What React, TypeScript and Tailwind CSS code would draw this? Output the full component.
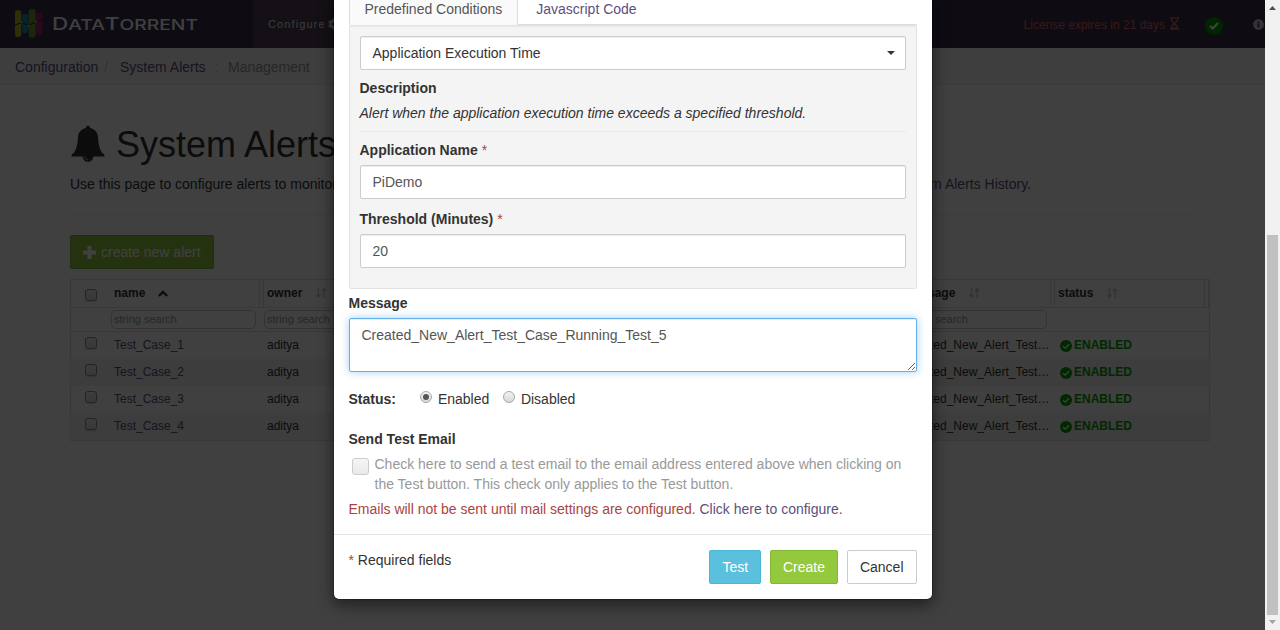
import React from "react";
import { FaCog, FaInfoCircle } from "react-icons/fa";

const rows = ["Test_Case_1", "Test_Case_2", "Test_Case_3", "Test_Case_4"];

function Logo() {
  return (
    <svg width="186" height="34" viewBox="0 0 186 34" className="shrink-0">
      <rect x="0" y="4" width="6.2" height="27" rx="3" fill="#bdb91e" />
      <rect x="6.7" y="7.7" width="6.5" height="19.3" rx="3" fill="#1b8ab2" />
      <rect x="13.7" y="3" width="7" height="28.7" rx="3.2" fill="#6b9c2e" />
      <rect x="21.3" y="6.300" width="6.2" height="22.700" rx="3" fill="#a61d76" />
      <path d="M0 19L7 16.500L13.300 19.700L21 15.700L27.500 14" stroke="#252033" strokeWidth="1" fill="none" />
      <circle cx="6.700" cy="16.500" r="1" fill="#d8c83c" />
      <circle cx="13.500" cy="19.700" r="1" fill="#d8c83c" />
      <circle cx="21" cy="15.700" r="1" fill="#d8c83c" />
      <text
        x="37"
        y="23.7"
        fill="#fff"
        textLength="146"
        lengthAdjust="spacingAndGlyphs"
        className="font-['Inter',sans-serif] text-[17px] font-medium"
      >
        D<tspan className="text-[14.5px]">ATA</tspan>T<tspan className="text-[14.5px]">ORRENT</tspan>
      </text>
    </svg>
  );
}

function Hourglass() {
  return (
    <svg width="9" height="13" viewBox="0 0 9 13" className="mb-px ml-[5px]" fill="none" stroke="#dd6663" strokeWidth="1.2">
      <path d="M0 .9h9M0 12.1h9M1.4 1v2.200L4.500 6.500L1.400 9.800V12M7.600 1v2.200L4.500 6.500L7.600 9.800V12M2.500 10.800h4" />
    </svg>
  );
}

function SortIcon() {
  return (
    <svg width="11" height="10" viewBox="0 0 11 10" fill="none" stroke="#c8c8c8" strokeWidth="1.3">
      <path d="M2.5 0v9M.3 6.8L2.5 9.2L4.7 6.8M8 10V1M5.8 3.2L8 .8L10.2 3.2" />
    </svg>
  );
}

function Box() {
  return <div className="h-3 w-3 rounded-[3px] border border-[#8f8f8f] bg-linear-to-b from-[#f4f4f4] to-[#dddddd] shadow-[0_1px_1px_rgba(0,0,0,0.15)]" />;
}

function Search({ className }: { className: string }) {
  return (
    <div className={`flex h-[19px] items-center rounded-[5px] border border-[#ccc] bg-white pl-[2px] text-[11px] text-[#999] ${className}`}>
      string search
    </div>
  );
}

function AlertsTable() {
  return (
    <div className="mt-[10px] h-[162px] w-[1140px] border border-[#ddd] text-[12px] leading-[17px]">
      <div className="flex h-[28px] border-b border-[#ddd] font-bold">
        <div className="w-[39px] pt-[9px] pl-[14px]"><Box /></div>
        <div className="flex w-[150px] border-r border-[#ddd] pt-[5px] pl-1">
          name
          <svg width="10" height="7" viewBox="0 0 10 7" className="mt-[5px] ml-[13px]" fill="none" stroke="#333" strokeWidth="2.4">
            <path d="M.9 6L5 1.900L9.100 6" />
          </svg>
        </div>
        <div className="ml-[3px] flex w-[150px] border-l border-[#ddd] pt-[5px] pl-[3px]">
          owner
          <span className="mt-[3px] ml-[14px]"><SortIcon /></span>
        </div>
        <div className="ml-auto flex w-[151px] border-r border-[#ddd] pt-[5px] pl-[4px]">
          message
          <span className="mt-[3px] ml-[14px]"><SortIcon /></span>
        </div>
        <div className="ml-[3px] flex w-[151px] border-x border-[#ddd] pt-[5px] pl-[3px]">
          status
          <span className="mt-[3px] ml-[14px]"><SortIcon /></span>
        </div>
        <div className="ml-[3px] w-[1px] bg-[#ddd]" />
      </div>
      <div className="flex h-[24px] border-b border-[#ddd] pt-[2px]">
        <Search className="ml-[40px] w-[145px]" />
        <Search className="ml-[8px] w-[145px]" />
        <Search className="ml-auto mr-[162px] w-[145px]" />
      </div>
      {rows.map((name) => (
        <div key={name} className="flex h-[27px] pt-[5px] [&:nth-child(even)]:bg-[#f1f1f1] [&:nth-child(odd)]:bg-white">
          <div className="w-[39px] pl-[14px]"><Box /></div>
          <div className="w-[153px] pl-1 text-[#5d5080]">{name}</div>
          <div className="pl-1">aditya</div>
          <div className="ml-auto w-[155px] pl-1">Created_New_Alert_Test…</div>
          <div className="flex w-[154px] pl-[5px] font-bold text-[#00a300]">
            <svg width="12" height="12" viewBox="0 0 12 12" className="mt-[3px] mr-[2px]">
              <circle cx="6" cy="6" r="6" fill="#00a300" />
              <path d="M3 6.200L5.200 8.200L9.100 4.200" fill="none" stroke="#fff" strokeWidth="1.3" />
            </svg>
            ENABLED
          </div>
        </div>
      ))}
    </div>
  );
}

function Page() {
  return (
    <div className="h-[630px] w-[1265px] bg-white">
      <header className="flex h-12 bg-[#382f4c]">
        <div className="w-[253px] pt-[6px] pl-[15px]"><Logo /></div>
        <div className="flex w-[100px] items-center bg-[#50405a] pl-[15px] text-[11px] tracking-[1.1px] text-[#e6e6e6]">
          Configure <FaCog className="ml-[2px] h-3 w-3" />
        </div>
        <div className="ml-auto flex items-center text-[12px] text-[#dd6663]">
          <span className="pt-px">License expires in 21 days</span> <Hourglass />
          <span className="mt-[3px] ml-[26px] flex h-[18px] w-[18px] items-center justify-center rounded-full bg-[#009900]">
            <svg width="10" height="8" viewBox="0 0 10 8" fill="none" stroke="#fff" strokeWidth="2.2"><path d="M1 4L3.7 6.5L9 1" /></svg>
          </span>
          <FaInfoCircle className="ml-[30px] h-[11px] w-[11px] text-[#ccc]" />
          <span className="w-[1px]" />
        </div>
      </header>
      <nav className="flex h-[37px] items-center border-b border-[#eaeaea] bg-[#f5f5f5] pt-[2px] pl-[15px] text-[#5d5080]">
        <span className="w-[89px]">Configuration</span>
        <span className="w-[16px] text-[#ccc]">/</span>
        <span className="w-[95px]">System Alerts</span>
        <span className="w-[13px] text-[#ccc]">:</span>
        <span className="text-[#999]">Management</span>
      </nav>
      <main className="mx-[70px] pt-10">
        <h1 className="flex h-[40px] items-center text-[36px] leading-[40px]">
          <svg width="36" height="37" viewBox="0 0 36 37" className="mr-[10px] mb-1" fill="#333">
            <path d="M18 .8c1.300 0 2.100.9 2 2.200c5 1 7.800 4.500 8.100 9.500c.4 8 1.900 14.500 6.400 17.200v1.800H23.300c0 3-2.300 5.300-5.300 5.300s-5.300-2.300-5.300-5.300H1.500v-1.800c4.500-2.700 6-9.200 6.400-17.200c.3-5 3.100-8.500 8.100-9.500c-.1-1.300.7-2.200 2-2.200z" />
            <path d="M14.700 31.500c0 1.900 1.400 3.400 3.300 3.400" fill="none" stroke="#fff" strokeWidth=".7" />
          </svg>
          System Alerts
        </h1>
        <div className="mt-[9px] flex w-[961px] justify-between">
          <span>Use this page to configure alerts to monitor</span>
          <span><span className="text-[#5d5080]">System Alerts History</span>.</span>
        </div>
        <hr className="mt-[20px] border-[#eee]" />
        <button className="mt-[20px] flex h-[34px] w-[144px] items-center rounded-[2px] border border-[#83b534] bg-[#94c83d] pl-3 text-white">
          <svg width="13" height="13" viewBox="0 0 13 13" className="mr-[5px]"><path d="M4.500 0h4v4.500H13v4H8.500V13h-4V8.500H0v-4h4.500z" fill="#fff" /></svg>
          create new alert
        </button>
        <AlertsTable />
      </main>
    </div>
  );
}

function Field({ children, className }: { children: React.ReactNode; className: string }) {
  return (
    <div className={`flex h-[34px] items-center rounded-[2px] border border-[#ccc] bg-white px-3 shadow-[inset_0_1px_1px_rgba(0,0,0,0.075)] ${className}`}>
      {children}
    </div>
  );
}

function Radio({ checked }: { checked?: boolean }) {
  return (
    <span className="mb-[4px] flex h-3 w-3 items-center justify-center rounded-full border border-[#a9a9a9] bg-linear-to-b from-[#f2f2f2] to-[#d8d8d8]">
      {checked && <span className="h-[6px] w-[6px] rounded-full bg-[#555]" />}
    </span>
  );
}

function Modal() {
  return (
    <div className="flex h-[600px] w-[600px] flex-col rounded-b-[6px] border border-t-0 border-black/20 bg-white bg-clip-padding shadow-[0_5px_15px_rgba(0,0,0,0.5)]">
      <div className="px-[15px]">
        <div className="flex h-[25px] border-b border-[#ddd]">
          <div className="h-[25px] border-x border-[#ddd] bg-[#fafafa] px-[15px] text-[#555]">
            <div className="-mt-px">Predefined Conditions</div>
          </div>
          <div className="-mt-px ml-[18px] text-[#5d5080]">Javascript Code</div>
        </div>
        <div className="h-[264px] rounded-[2px] border border-[#e3e3e3] bg-[#f4f4f4] p-[10px] shadow-[inset_0_1px_1px_rgba(0,0,0,0.05)]">
          <Field className="justify-between pr-[10px]">
            Application Execution Time
            <svg width="8" height="4" viewBox="0 0 8 4"><path d="M0 0h8L4 4z" fill="#333" /></svg>
          </Field>
          <div className="mt-2 font-bold">Description</div>
          <div className="mt-[5px] italic">Alert when the application execution time exceeds a specified threshold.</div>
          <hr className="mt-2 border-[#eaeaea]" />
          <div className="mt-2"><b>Application Name</b> <span className="text-[#a94442]">*</span></div>
          <Field className="mt-[5px] text-[#555]">PiDemo</Field>
          <div className="mt-[10px]"><b>Threshold (Minutes)</b> <span className="text-[#a94442]">*</span></div>
          <Field className="mt-[5px] text-[#555]">20</Field>
        </div>
        <div className="mt-1 font-bold">Message</div>
        <textarea
          readOnly
          value="Created_New_Alert_Test_Case_Running_Test_5"
          className="mt-[5px] block h-[54px] w-full resize-y rounded-[2px] border border-[#66afe9] bg-white px-3 py-[6px] text-[#555] shadow-[inset_0_1px_1px_rgba(0,0,0,0.075),0_0_8px_rgba(102,175,233,0.6)] outline-none"
        />
        <div className="mt-[17px] flex h-5 items-center">
          <b className="w-[71px]">Status:</b>
          <Radio checked />
          <span className="ml-[6.4px] w-[65px]">Enabled</span>
          <Radio />
          <span className="ml-[6px]">Disabled</span>
        </div>
        <div className="mt-5 font-bold">Send Test Email</div>
        <div className="mt-[5px] flex text-[#999]">
          <div className="mt-1 mr-[6px] ml-[3px] h-[17px] w-[17px] shrink-0 rounded-[3px] border border-[#ccc] bg-linear-to-b from-[#f6f6f6] to-[#e9e9e9]" />
          <div>
            Check here to send a test email to the email address entered above when clicking on
            <br />
            the Test button. This check only applies to the Test button.
          </div>
        </div>
        <div className="mt-[5px] text-[#a94442]">
          Emails will not be sent until mail settings are configured. <span className="text-[#5d5080]">Click here to configure.</span>
        </div>
      </div>
      <footer className="mt-[15px] flex items-start border-t border-[#e5e5e5] p-[15px]">
        <div className="mr-auto"><span className="text-[#a94442]">*</span> Required fields</div>
        <div className="flex gap-[8.9px]">
          <button className="h-[34px] rounded-[2px] border border-[#46b8da] bg-[#5bc0de] px-3 text-white">Test</button>
          <button className="h-[34px] rounded-[2px] border border-[#85b737] bg-[#94c83d] px-3 text-white">Create</button>
          <button className="h-[34px] rounded-[2px] border border-[#ccc] bg-white px-3">Cancel</button>
        </div>
      </footer>
    </div>
  );
}

function Scrollbar() {
  return (
    <div className="flex h-[630px] w-[15px] flex-col items-center bg-[#f1f1f1]">
      <svg width="7" height="4" viewBox="0 0 7 4" className="mt-[6px]"><path d="M0 4h7L3.500 0z" fill="#505050" /></svg>
      <div className="mt-[225px] h-[380px] w-[11px] bg-[#c1c1c1]" />
      <svg width="7" height="4" viewBox="0 0 7 4" className="mt-[5px]"><path d="M0 0h7L3.500 4z" fill="#a3a3a3" /></svg>
    </div>
  );
}

export default function App() {
  return (
    <div className="relative flex h-[630px] w-[1280px] overflow-hidden font-['Liberation_Sans',Arial,sans-serif] text-[14px] leading-5 text-[#333]">
      <Page />
      <Scrollbar />
      <div className="absolute inset-y-0 left-0 flex w-[1265px] items-start justify-center bg-black/75">
        <Modal />
      </div>
    </div>
  );
}
